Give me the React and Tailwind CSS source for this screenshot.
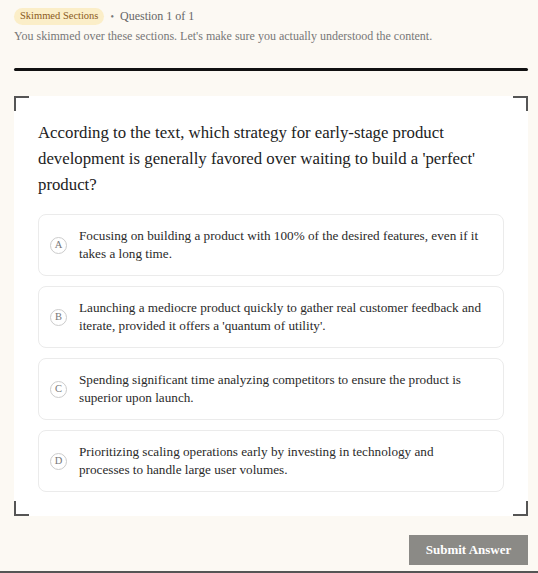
import { useState } from 'react'

const options = [
  { key: 'A', text: 'Focusing on building a product with 100% of the desired features, even if it takes a long time.' },
  { key: 'B', text: "Launching a mediocre product quickly to gather real customer feedback and iterate, provided it offers a 'quantum of utility'." },
  { key: 'C', text: 'Spending significant time analyzing competitors to ensure the product is superior upon launch.' },
  { key: 'D', text: 'Prioritizing scaling operations early by investing in technology and processes to handle large user volumes.' },
]

const serif = { fontFamily: '"Liberation Serif", "DejaVu Serif", serif' }

export default function App() {
  const [selected, setSelected] = useState(null)

  return (
    <div className="min-h-[573px] bg-[#fcf9f3] flex flex-col" style={serif}>
      <div className="pl-[14px] pr-[10px] pt-[7px]">
        <div className="flex items-center gap-[6px]">
          <span className="rounded-full bg-[#fbeec8] px-[6px] h-[17px] flex items-center text-[10.5px] text-[#8b5a1c]">Skimmed Sections</span>
          <span className="text-[#777] text-[10px]">•</span>
          <span className="text-[12px] text-[#666]">Question 1 of 1</span>
        </div>
        <p className="mt-[2px] text-[12px] text-[#777]">You skimmed over these sections. Let's make sure you actually understood the content.</p>
        <div className="mt-[23px] h-[3px] rounded-full bg-[#111]" />
      </div>

      <div className="ml-[14px] mr-[10px] mt-[25px] relative bg-white px-[24px] pt-[24px] pb-[24px]">
        <span className="absolute left-0 top-0 w-[15px] h-[15px] border-l-2 border-t-2 border-[#555]" />
        <span className="absolute right-0 top-0 w-[15px] h-[15px] border-r-2 border-t-2 border-[#555]" />
        <span className="absolute left-0 bottom-0 w-[15px] h-[15px] border-l-2 border-b-2 border-[#555]" />
        <span className="absolute right-0 bottom-0 w-[15px] h-[15px] border-r-2 border-b-2 border-[#555]" />

        <h2 className="text-[16.8px] leading-[26px] text-[#222] pr-[14px]">
          According to the text, which strategy for early-stage product development is generally favored over waiting to build a 'perfect' product?
        </h2>

        <div className="mt-[16px] flex flex-col gap-[10px]">
          {options.map((o) => (
            <button key={o.key} onClick={() => setSelected(o.key)}
              className={`flex items-center gap-[12px] text-left rounded-[8px] border px-[11px] h-[62px] ${selected === o.key ? 'border-[#999]' : 'border-[#ebebeb]'}`}>
              <span className="shrink-0 w-[17px] h-[17px] rounded-full border border-[#ccc] flex items-center justify-center text-[10.5px] text-[#777]">{o.key}</span>
              <span className="text-[13.2px] leading-[18px] text-[#2a2a2a] pr-[10px]">{o.text}</span>
            </button>
          ))}
        </div>
      </div>

      <div className="flex justify-end pr-[10px] mt-[19px]">
        <button className="w-[119px] h-[30px] bg-[#8b8a86] text-white text-[13px] font-bold">Submit Answer</button>
      </div>
      <div className="mt-auto h-[2px] bg-[#555]" />
    </div>
  )
}
